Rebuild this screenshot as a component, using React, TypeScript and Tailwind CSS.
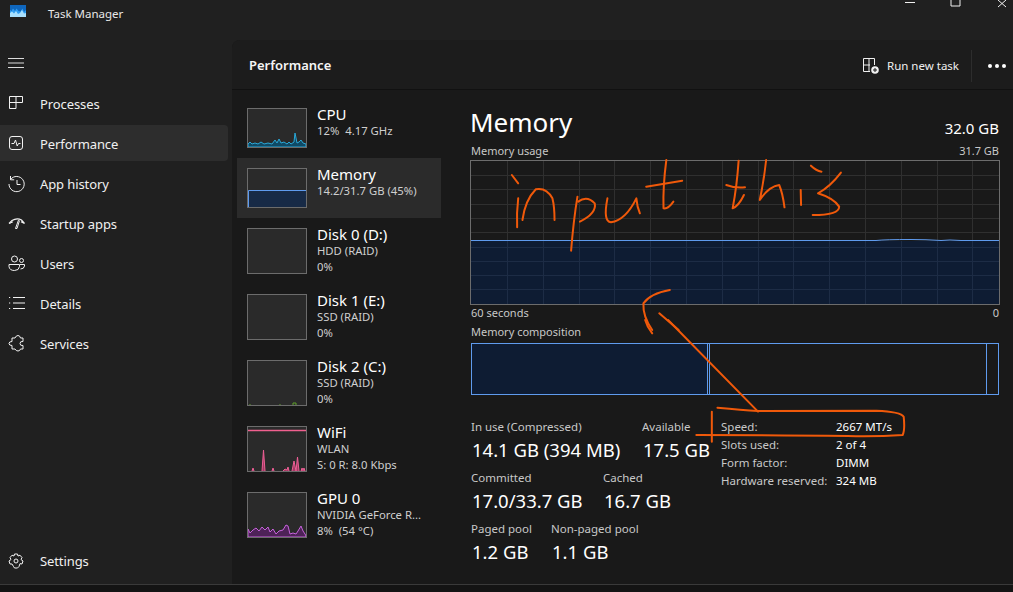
import { ReactNode } from "react";

const font = { fontFamily: '"Noto Sans", "Open Sans", sans-serif' };

function Icon({ children }: { children: ReactNode }) {
  return (
    <svg width="18" height="18" viewBox="0 0 18 18" fill="none" stroke="#f2f2f2" strokeWidth="1" className="shrink-0 mt-[2px]">
      {children}
    </svg>
  );
}

const navItems: { label: string; icon: ReactNode; active?: boolean }[] = [
  {
    label: "Processes",
    icon: <path d="M1.5 1.5H14.5V7.5H8V13.5H1.5ZM1.5 7.5H8M8 1.5V7.5" />,
  },
  {
    label: "Performance",
    active: true,
    icon: (
      <>
        <rect x="1.5" y="1.5" width="13" height="13" rx="2.5" />
        <path d="M3.5 8.5H6L7.5 5L9.2 11L10.5 8.5H12.5" />
      </>
    ),
  },
  {
    label: "App history",
    icon: (
      <>
        <path d="M2.6 4.4A7.6 7.6 0 1 1 1 9" />
        <path d="M2.5 1V4.8H6.2M9 5V9.5H12.5" />
      </>
    ),
  },
  {
    label: "Startup apps",
    icon: (
      <>
        <path d="M1 8.5L4 5.5Q9 2.5 13.5 5L16.5 8.5L13 6.8" strokeWidth="1.2" />
        <path d="M1.5 8.5L5 6.8M10.5 5L7.5 13.5H9L11.5 5.5" />
      </>
    ),
  },
  {
    label: "Users",
    icon: (
      <>
        <circle cx="6.5" cy="4" r="3" />
        <circle cx="13.5" cy="5.5" r="2" />
        <path d="M1 9.5H11.5V11.5Q11 15.5 6.5 15.5Q1.5 15.5 1 11.5ZM12 9.5H16.5V11Q16 14 12.5 14" />
      </>
    ),
  },
  {
    label: "Details",
    icon: <path d="M1 2.5H2.2M1 8H2.2M1 13.5H2.2M5 2.5H17M5 8H17M5 13.5H17" />,
  },
  {
    label: "Services",
    icon: (
      <path d="M7 3Q8 .5 10 .5Q12 .5 12.5 3H15V6.5Q12 6 12 8.5Q12 11 15 10.5V14H12.5Q12 16 10 16Q8 16 7 14H4V10.5Q1 10.5 1 8.5Q1 6.5 4 6.5V3Z" />
    ),
  },
];

function NavRow({ label, icon, active }: { label: string; icon: ReactNode; active?: boolean }) {
  return (
    <div className="h-10 flex items-center pr-1">
      <div className={`w-full h-9 flex items-center pl-2 gap-[14px] rounded-r ${active ? "bg-[#2d2d2d]" : ""}`}>
        <Icon>{icon}</Icon>
        <span className="text-[13px] text-[#f0f0f0] tracking-[-0.1px] mt-1">{label}</span>
      </div>
    </div>
  );
}

function Thumb({ tall, children }: { tall?: boolean; children?: ReactNode }) {
  return (
    <div className={`w-[60px] shrink-0 border border-[#6c6c6c] bg-[#2a2a2a] ${tall ? "h-[46px]" : "h-10"}`}>
      {children && (
        <svg width="58" height={tall ? 44 : 38} viewBox={`0 0 58 ${tall ? 44 : 38}`} className="block">
          {children}
        </svg>
      )}
    </div>
  );
}

function PerfRow({
  title,
  sub,
  sub2,
  active,
  thumb,
}: {
  title: string;
  sub: string;
  sub2?: string;
  active?: boolean;
  thumb: ReactNode;
}) {
  return (
    <div className={`flex gap-[10px] p-[10px] ${active ? "bg-[#2b2b2b]" : ""} ${sub2 ? "h-[66px]" : "h-[60px]"}`}>
      {thumb}
      <div className="flex flex-col -mt-[3px] min-w-0">
        <span className="text-[15px] leading-[18px] text-white">{title}</span>
        <span className="text-[11.3px] leading-[15px] text-[#cfcfcf] whitespace-pre">{sub}</span>
        {sub2 && <span className="text-[11.3px] leading-[15px] mt-px text-[#cfcfcf] whitespace-pre">{sub2}</span>}
      </div>
    </div>
  );
}

function Stat({ label, value, width }: { label: string; value: string; width: string }) {
  return (
    <div className={`h-[51px] shrink-0 ${width}`}>
      <div className="h-[18px] leading-[18px] text-[11.5px] text-[#c8c8c8] whitespace-nowrap">{label}</div>
      <div className="h-[28px] leading-[28px] text-[18.5px] text-white whitespace-nowrap ml-px">{value}</div>
    </div>
  );
}

function UsageChart() {
  const vertical = Array.from({ length: 15 }, (_, i) => Math.round(36 + i * 35.8) + 0.5);
  const horizontal = Array.from({ length: 9 }, (_, i) => Math.round(14 + i * 14.3) + 0.5);
  return (
    <svg width="528" height="143" viewBox="0 0 528 143" className="block border border-[#6c6c6c] box-content -mx-px w-[528px]">
      <rect width="528" height="143" fill="#191919" />
      <rect y="80" width="528" height="63" fill="#0e1c33" />
      {vertical.map((x) => (
        <g key={x}>
          <line x1={x} x2={x} y1="0" y2="79" stroke="#2f2f2f" />
          <line x1={x} x2={x} y1="80" y2="143" stroke="#1d2c45" />
        </g>
      ))}
      {horizontal.map((y) => (
        <line key={y} x1="0" x2="528" y1={y} y2={y} stroke={y > 80 ? "#1d2c45" : "#2f2f2f"} />
      ))}
      <path d="M0 79.5H405Q415 78.5 440 78.5Q455 78.5 470 79.5Q478 78.5 490 79.5H528" fill="none" stroke="#5f9bee" />
    </svg>
  );
}

function Annotations() {
  const strokes5 = [
    "M147 225L165 250",
    "M165 295Q160 340 162 382",
    "M177 360Q185 300 215 268Q245 262 262 295Q268 320 268 360",
    "M333 290Q322 360 315 452",
    "M335 305Q360 285 382 310Q388 340 340 365",
    "M418 295Q405 365 428 367Q470 360 500 295Q502 320 510 340",
    "M585 180Q575 260 577 325Q590 328 605 305",
    "M528 260L630 242",
    "M790 182Q785 260 773 325Q790 318 805 285",
    "M755 255Q780 265 808 262",
    "M868 180Q862 240 850 300Q875 260 905 255Q915 280 920 322",
    "M995 197Q1010 212 1025 215",
    "M966 270L967 315",
    "M1080 218Q1050 260 1015 280Q1060 295 1075 320Q1075 345 1000 345",
    "M595 570Q540 580 520 610Q518 650 545 690",
  ];
  const strokes6 = [
    "M545 40Q530 20 525 0",
    "M590 0L845 275",
    "M730 263Q800 270 845 273Q1000 272 1180 272Q1250 275 1258 290Q1262 330 1255 345Q1180 350 1100 348Q900 345 670 345",
    "M714 275V365",
  ];
  return (
    <svg className="absolute inset-0 pointer-events-none" width="1013" height="592" viewBox="0 0 1013 592" fill="none" stroke="#f0590a" strokeWidth="2" strokeLinecap="round" strokeLinejoin="round">
      <g transform="translate(460 100) scale(0.3527 0.3333)">
        {strokes5.map((d) => (
          <path key={d} d={d} vectorEffect="non-scaling-stroke" />
        ))}
        <path d="M565 640L620 690" vectorEffect="non-scaling-stroke" />
      </g>
      <g transform="translate(460 320) scale(0.3527 0.3333)">
        {strokes6.map((d) => (
          <path key={d} d={d} vectorEffect="non-scaling-stroke" />
        ))}
      </g>
    </svg>
  );
}

const specs = [
  ["Speed:", "2667 MT/s"],
  ["Slots used:", "2 of 4"],
  ["Form factor:", "DIMM"],
  ["Hardware reserved:", "324 MB"],
];

export default function App() {
  return (
    <div className="relative w-[1013px] h-[592px] overflow-hidden bg-[#202020] flex flex-col" style={font}>
      {/* title bar */}
      <div className="h-10 flex shrink-0">
        <div className="w-[232px] shrink-0 flex items-center h-7 pl-[10px]">
          <svg width="16" height="12" viewBox="0 0 16 12" className="shrink-0 -mt-[6px]">
            <rect width="16" height="12" fill="#2f9df2" />
            <rect width="16" height="3" fill="#0f66bd" />
            <path d="M0 3H16V5L14 7L12.5 3.5L10.5 6.5L8.5 6L6.5 3.5L5 6L3 3.5L1.5 6L0 5Z" fill="#0f66bd" />
            <path d="M0 8L2 6.5L4 8.5L6 6L8 9L10 8L12 5L14 8.5L16 8V12H0Z" fill="#a8e0ff" />
          </svg>
          <span className="ml-[22px] text-[11.5px] text-[#e8e8e8]">Task Manager</span>
        </div>
        <div className="flex-1 flex justify-end">
          <svg width="110" height="8" viewBox="0 0 110 8" fill="none" stroke="#f0f0f0" strokeWidth="1">
            <path d="M2 2.5H12M48 -3H57V6H48ZM95 0L103 7M103 0L95 7" />
          </svg>
        </div>
      </div>

      <div className="flex h-[544px] shrink-0">
        {/* sidebar */}
        <nav className="w-[232px] shrink-0 flex flex-col pt-[3px] pb-1">
          <div className="h-10 flex items-center pl-2">
            <svg width="16" height="12" viewBox="0 0 16 12" fill="none" stroke="#dcdcdc">
              <path d="M0 1.5H16M0 6H16M0 10.5H16" />
            </svg>
          </div>
          {navItems.map((n) => (
            <NavRow key={n.label} {...n} />
          ))}
          <div className="mt-auto">
            <NavRow
              label="Settings"
              icon={
                <>
                  <circle cx="8" cy="9" r="2" />
                  <path d="M6.5 2H9.5L10 4L12 3.2L14 5.6L13 7.5L15 9L14 12L12 11.6L11 14.5L9.5 16H6.5L5.5 14.5L4 12L2 12L1 9L3 7.5L2 5.6L4 3.2L6 4Z" />
                </>
              }
            />
          </div>
        </nav>

        {/* main panel */}
        <main className="flex-1 bg-[#191919] rounded-tl-lg flex flex-col min-w-0">
          <header className="h-[50px] shrink-0 bg-[#1c1c1c] rounded-tl-lg border-b border-[#111111] flex items-center pl-[17px] pt-[2px]">
            <span className="text-[13px] font-semibold text-[#f5f5f5]">Performance</span>
            <div className="ml-auto flex items-center">
              <svg width="16" height="16" viewBox="0 0 16 16" fill="none" stroke="#f0f0f0" className="mr-[8px]">
                <path d="M.5 .5H11.5V7M.5 .5V13.5H7M.5 7H7M6 .5V13.5" />
                <circle cx="12" cy="12" r="3.8" fill="#f0f0f0" stroke="none" />
                <path d="M10 12H14M12 10V14" stroke="#1c1c1c" />
              </svg>
              <span className="text-[11.5px] text-[#f0f0f0] w-[84px]">Run new task</span>
              <div className="w-px h-8 bg-[#2d2d2d]" />
              <div className="flex gap-[3px] ml-[16px] mr-[7px]">
                <span className="w-1 h-1 rounded-full bg-white" />
                <span className="w-1 h-1 rounded-full bg-white" />
                <span className="w-1 h-1 rounded-full bg-white" />
              </div>
            </div>
          </header>

          <div className="flex flex-1 min-h-0">
            {/* device list */}
            <div className="w-[204px] ml-[5px] shrink-0 pt-2">
              <PerfRow
                title="CPU"
                sub="12%  4.17 GHz"
                thumb={
                  <Thumb>
                    <path d="M0 35L2 33L4 35L7 34L10 35L13 33L16 35L20 34L24 35L27 31L29 34L31 30L33 34L36 33L39 35L41 33L43 35L46 33L47 24L49 34L51 33L53 31L55 34L58 35V38H0Z" fill="#0f4a66" stroke="#2aa7d6" />
                  </Thumb>
                }
              />
              <PerfRow
                title="Memory"
                sub="14.2/31.7 GB (45%)"
                active
                thumb={
                  <Thumb>
                    <rect x="0" y="21" width="58" height="17" fill="#172a46" />
                    <path d="M.5 38V21.5H58" fill="none" stroke="#5f9bee" />
                  </Thumb>
                }
              />
              <PerfRow title="Disk 0 (D:)" sub="HDD (RAID)" sub2="0%" thumb={<Thumb tall />} />
              <PerfRow title="Disk 1 (E:)" sub="SSD (RAID)" sub2="0%" thumb={<Thumb tall />} />
              <PerfRow
                title="Disk 2 (C:)"
                sub="SSD (RAID)"
                sub2="0%"
                thumb={
                  <Thumb tall>
                    <path d="M2 44V43M32 44V43M45 44V42H48V44" stroke="#5fa02a" fill="none" />
                  </Thumb>
                }
              />
              <PerfRow
                title="WiFi"
                sub="WLAN"
                sub2="S: 0 R: 8.0 Kbps"
                thumb={
                  <Thumb tall>
                    <path d="M0 3.5H58" stroke="#f0608f" strokeWidth="1.5" />
                    <path d="M4 44L5 41L6 44M14 44L15.5 23L17 44M24 44L25 41L26 44M35 44L37 42L39 43L40 40L41 44M44 44L46 34L48 44M48 44L49.5 30L51 44M53 44L54 41L55 43L56 41L57 44Z" fill="#a23a63" stroke="#ec5f95" />
                  </Thumb>
                }
              />
              <PerfRow
                title="GPU 0"
                sub="NVIDIA GeForce R..."
                sub2="8%  (54 °C)"
                thumb={
                  <Thumb tall>
                    <path d="M0 36L2 40L5 37L8 35L11 38L14 34L17 37L20 34L22 39L25 36L28 41L31 38L35 37L38 32L40 33L42 41L45 40L48 41L50 38L53 33L55 38L57 41L58 43V44H0Z" fill="#4e2258" stroke="#c763dc" />
                  </Thumb>
                }
              />
            </div>

            {/* detail */}
            <section className="w-[528px] ml-[30px] shrink-0 text-white">
              <div className="flex justify-between items-end h-[52px]">
                <span className="text-[26px] leading-[36px] -ml-px mb-[2px]">Memory</span>
                <span className="text-[15px] leading-[22px] mb-[3px]">32.0 GB</span>
              </div>
              <div className="flex justify-between h-[18px] items-center text-[11px] text-[#c8c8c8]">
                <span>Memory usage</span>
                <span>31.7 GB</span>
              </div>
              <UsageChart />
              <div className="flex justify-between h-[17px] items-center text-[11px] text-[#c8c8c8]">
                <span>60 seconds</span>
                <span>0</span>
              </div>
              <div className="h-[21px] flex items-center text-[11px] text-[#c8c8c8]">Memory composition</div>
              <div className="flex h-[52px] border border-[#5f9bee]">
                <div className="w-[236px] bg-[#0e1c33] border-r border-[#5f9bee]" />
                <div className="w-[278px] ml-[1px] border-x border-[#5f9bee]" />
              </div>
              <div className="flex mt-[23px]">
                <div className="w-[250px] shrink-0">
                  <div className="flex">
                    <Stat label="In use (Compressed)" value="14.1 GB (394 MB)" width="w-[171px]" />
                    <Stat label="Available" value="17.5 GB" width="w-[79px]" />
                  </div>
                  <div className="flex">
                    <Stat label="Committed" value="17.0/33.7 GB" width="w-[132px]" />
                    <Stat label="Cached" value="16.7 GB" width="w-[100px]" />
                  </div>
                  <div className="flex">
                    <Stat label="Paged pool" value="1.2 GB" width="w-[80px]" />
                    <Stat label="Non-paged pool" value="1.1 GB" width="w-[100px]" />
                  </div>
                </div>
                <div className="flex flex-col">
                  {specs.map(([k, v]) => (
                    <div key={k} className="flex h-[18px] items-center text-[11.5px]">
                      <span className="w-[115px] text-[#c8c8c8] whitespace-nowrap">{k}</span>
                      <span className="text-white">{v}</span>
                    </div>
                  ))}
                </div>
              </div>
            </section>
          </div>
        </main>
      </div>

      <div className="flex-1 bg-[#141414] border-t border-[#3a3a3a]" />
      <Annotations />
    </div>
  );
}
